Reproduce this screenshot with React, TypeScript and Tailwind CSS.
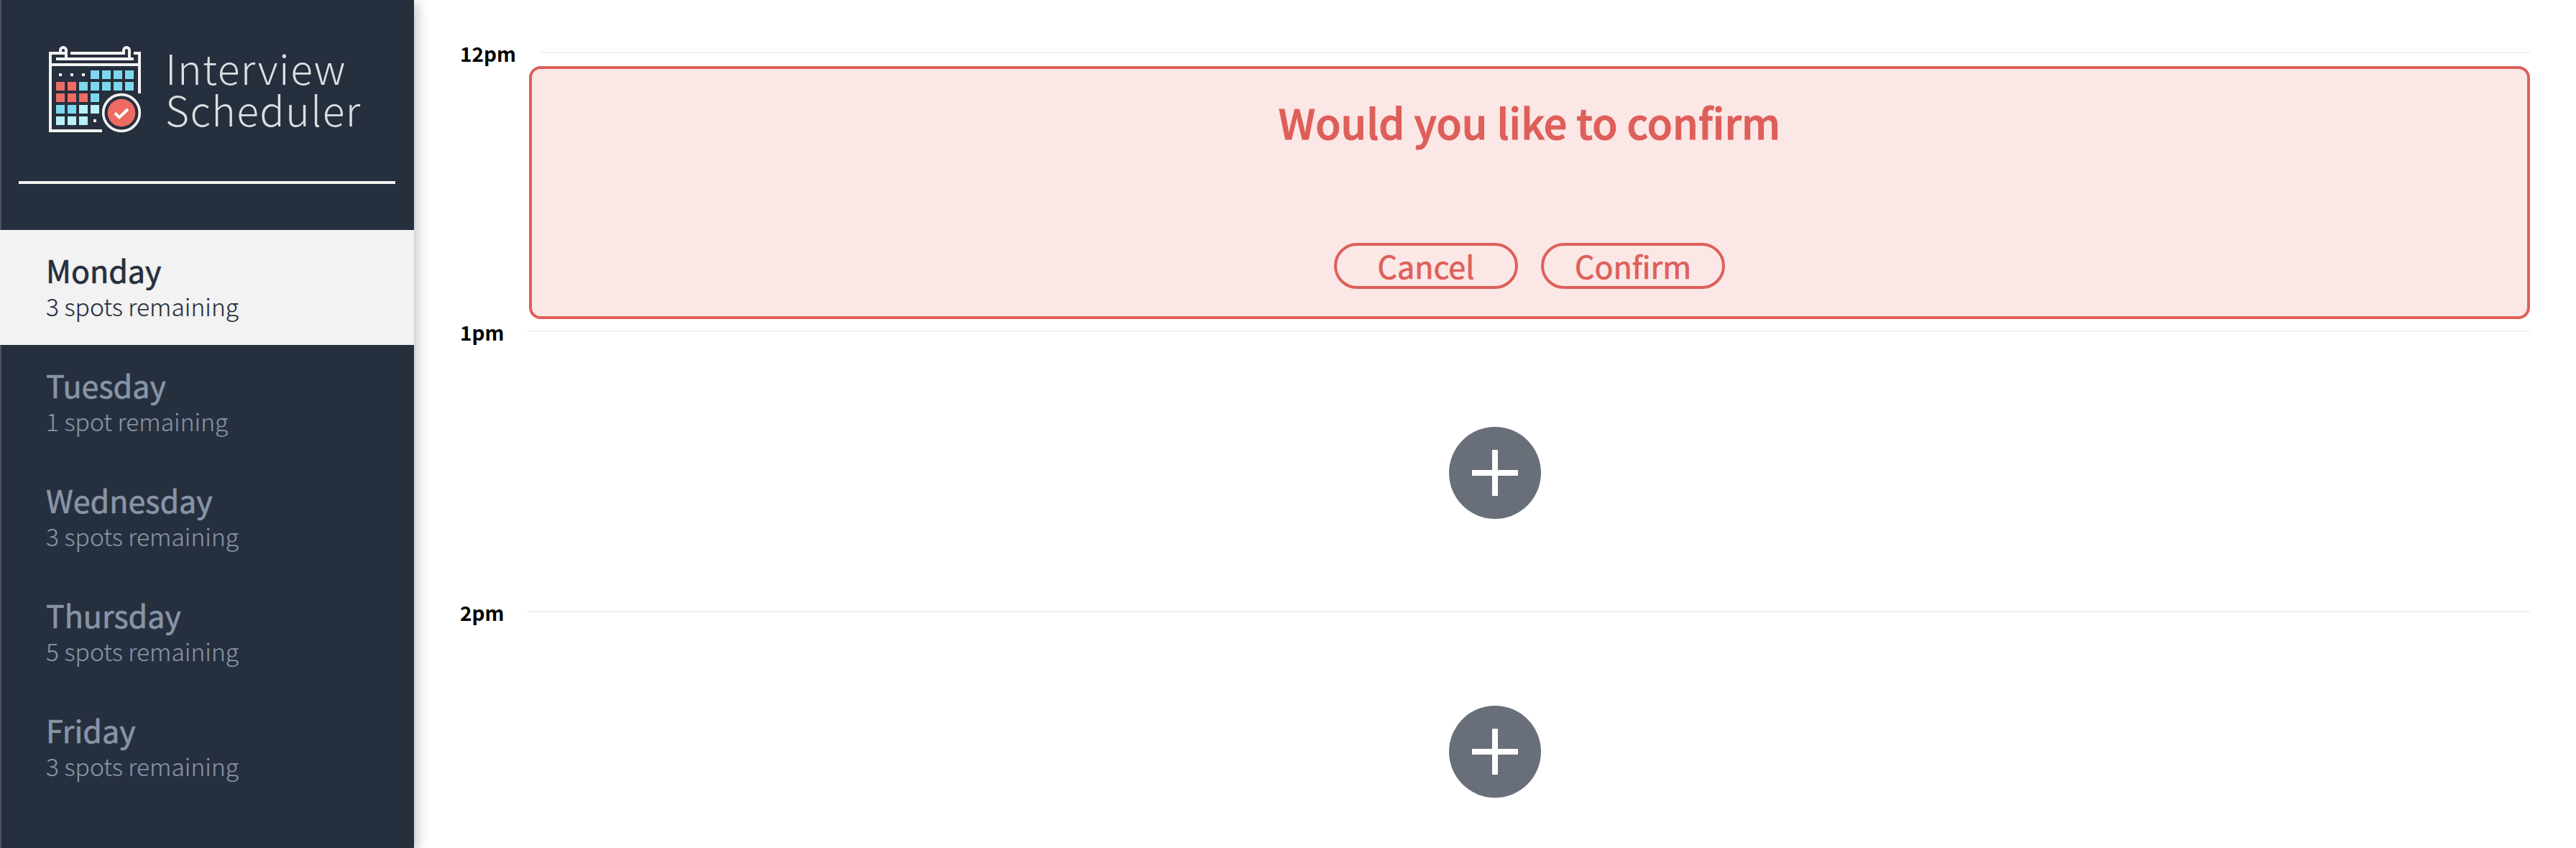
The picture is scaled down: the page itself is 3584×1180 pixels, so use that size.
type Day = { name: string; spots: string; selected?: boolean };

const DAYS: Day[] = [
  { name: "Monday", spots: "3 spots remaining", selected: true },
  { name: "Tuesday", spots: "1 spot remaining" },
  { name: "Wednesday", spots: "3 spots remaining" },
  { name: "Thursday", spots: "5 spots remaining" },
  { name: "Friday", spots: "3 spots remaining" },
];

const BLUE = "#7dd8ef";
const PALE = "#b9f0fa";
const RED = "#ed6b62";

// One entry per calendar row; null is a small dot.
const CELLS: (string | null)[][] = [
  [null, null, null, BLUE, BLUE, BLUE, BLUE],
  [RED, RED, BLUE, BLUE, BLUE, BLUE, BLUE],
  [RED, RED, RED, BLUE],
  [BLUE, BLUE, PALE, PALE],
  [PALE, PALE, PALE, null],
];

function CalendarLogo() {
  return (
    <svg viewBox="0 0 480 450" className="h-[150px] w-40 shrink-0" fill="none">
      <g stroke="#f2f2f2" strokeWidth="12">
        <path d="M120 72H60V396H276" />
        <path d="M144 72H372" />
        <path d="M408 72H432V240" />
        <path d="M84 96H408" />
        <path d="M60 120H432" />
        <path d="M102 72V60a12 12 0 0 1 24 0V96" />
        <path d="M366 72V60a12 12 0 0 1 24 0V96" />
      </g>
      {CELLS.map((row, y) =>
        row.map((c, x) =>
          c === null ? (
            <rect key={`${x}-${y}`} x={96 + x * 48} y={156 + y * 48} width="12" height="12" fill="#f2f2f2" />
          ) : (
            <rect key={`${x}-${y}`} x={84 + x * 48} y={144 + y * 48} width="36" height="36" fill={c} />
          ),
        ),
      )}
      <circle cx="357" cy="321" r="76" stroke="#f2f2f2" strokeWidth="11" />
      <circle cx="357" cy="321" r="58" fill={RED} />
      <path d="M330 322L348 340L384 306" stroke="#fff" strokeWidth="12" />
    </svg>
  );
}

function DayItem({ name, spots, selected }: Day) {
  return (
    <li
      className={
        selected
          ? "h-40 bg-[#f2f2f2] px-16 pt-[31px] text-[#262f3d]"
          : "h-40 px-16 pt-[31px] text-[#8794a6]"
      }
    >
      <h2 className="text-[43px] leading-[48px] [-webkit-text-stroke:0.7px_currentColor]">{name}</h2>
      <h3 className="mt-[7px] text-[33.6px] leading-10 font-light [-webkit-text-stroke:0.2px_currentColor]">{spots}</h3>
    </li>
  );
}

function HourHeader({ time }: { time: string }) {
  return (
    <header className="flex h-10 items-center gap-8">
      <h4 className="text-[28px] leading-10 font-bold text-black">{time}</h4>
      <div className="mb-0.5 h-0.5 flex-1 bg-[#f2f2f2]" />
    </header>
  );
}

function AddButton() {
  return (
    <button className="flex size-32 items-center justify-center rounded-full bg-[#696f79]">
      <svg viewBox="0 0 64 64" className="size-16" stroke="#fff" strokeWidth="8">
        <path d="M32 0V64M0 32H64" />
      </svg>
    </button>
  );
}

function DangerButton({ label }: { label: string }) {
  return (
    <button className="flex h-16 w-64 items-center justify-center rounded-full border-4 border-[#de5f5a] pb-0.5 text-[43px] leading-none text-[#de5f5a] [-webkit-text-stroke:0.7px_currentColor]">
      {label}
    </button>
  );
}

export default function App() {
  return (
    <main className="flex h-[1180px] w-full overflow-hidden bg-white font-['Noto_Sans_CJK_SC','Noto_Sans',sans-serif]">
      <aside className="z-10 w-[576px] shrink-0 bg-[#262f3d] shadow-[4px_4px_16px_rgba(37,46,62,0.3),inset_2px_0_0_rgba(255,255,255,0.18)]">
        <div className="flex h-[252px] gap-5 pt-[50px] pl-[50px]">
          <CalendarLogo />
          <div className="pt-[14px] text-[57px] leading-[58px] font-light tracking-[1.4px] text-[#dcdee1]">
            <p>Interview</p>
            <p>Scheduler</p>
          </div>
        </div>
        <hr className="mx-[26px] h-1 border-0 bg-[#f2f2f0]" />
        <ul className="mt-16">
          {DAYS.map((d) => (
            <DayItem key={d.name} {...d} />
          ))}
        </ul>
      </aside>

      <section className="flex-1 px-16 pt-[54px]">
        <article className="h-[388px]">
          <HourHeader time="12pm" />
          <div className="-mt-0.5 ml-24 flex h-[352px] flex-col items-center rounded-2xl border-4 border-[#de5f5a] bg-[#fbe7e5] pt-[42px]">
            <h1 className="text-[57.3px] leading-[64px] font-medium tracking-[0.1px] text-[#de5f5a] [-webkit-text-stroke:1.2px_#de5f5a]">
              Would you like to confirm
            </h1>
            <div className="mt-[136px] flex gap-8">
              <DangerButton label="Cancel" />
              <DangerButton label="Confirm" />
            </div>
          </div>
        </article>
        <article className="h-[390px]">
          <HourHeader time="1pm" />
          <div className="flex justify-center pt-28">
            <AddButton />
          </div>
        </article>
        <article>
          <HourHeader time="2pm" />
          <div className="flex justify-center pt-[110px]">
            <AddButton />
          </div>
        </article>
      </section>
    </main>
  );
}
